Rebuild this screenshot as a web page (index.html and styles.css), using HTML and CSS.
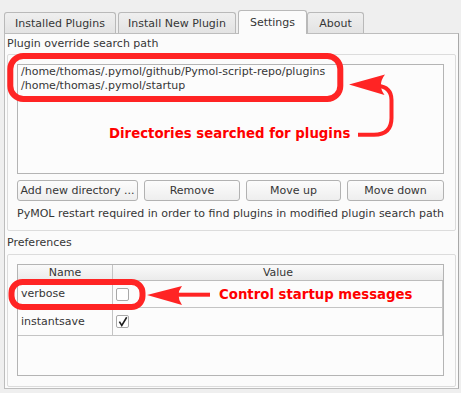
FILE: index.html
```html
<!DOCTYPE html>
<html lang="en">
<head>
    <meta charset="UTF-8">
    <title>Plugin Manager - Settings</title>
    <link rel="stylesheet" href="styles.css">
</head>
<body>
    <div class="tabbar">
        <div class="tab tab-installed">Installed Plugins</div>
        <div class="tab tab-install">Install New Plugin</div>
        <div class="tab tab-settings active">Settings</div>
        <div class="tab tab-about">About</div>
    </div>

    <div class="panel">
        <div class="group-title">Plugin override search path</div>
        <div class="frame frame-path">
            <div class="path-list">
                <div class="path-item">/home/thomas/.pymol/github/Pymol-script-repo/plugins</div>
                <div class="path-item">/home/thomas/.pymol/startup</div>
            </div>
            <div class="button-row">
                <button class="btn btn-add">Add new directory ...</button>
                <button class="btn btn-remove">Remove</button>
                <button class="btn btn-up">Move up</button>
                <button class="btn btn-down">Move down</button>
            </div>
            <div class="note">PyMOL restart required in order to find plugins in modified plugin search path</div>
        </div>

        <div class="group-title title-prefs">Preferences</div>
        <div class="frame frame-prefs">
            <div class="pref-table">
                <div class="pref-row pref-head">
                    <div class="cell cell-name">Name</div>
                    <div class="cell cell-value">Value</div>
                </div>
                <div class="pref-row">
                    <div class="cell cell-name">verbose</div>
                    <div class="cell cell-value"><span class="checkbox"></span></div>
                </div>
                <div class="pref-row pref-row-2">
                    <div class="cell cell-name">instantsave</div>
                    <div class="cell cell-value">
                        <span class="checkbox">
                            <svg width="12" height="12" viewBox="0 0 12 12"><path d="M2.6 5.6 L5.2 9.8 L10.6 0.8" fill="none" stroke="#1e1e1e" stroke-width="1.7"/></svg>
                        </span>
                    </div>
                </div>
            </div>
        </div>
    </div>

    <!-- red notes drawn over the screenshot -->
    <svg class="marks" width="461" height="393" viewBox="0 0 461 393">
        <rect x="10.3" y="56" width="330" height="43" rx="13" fill="none" stroke="#ff2424" stroke-width="6"/>
        <path d="M358 134.7 L374 134.7 Q391.5 134.7 391.5 118 L391.5 100 Q391.5 87 377 85.5" fill="none" stroke="#ff2424" stroke-width="4"/>
        <path d="M349 84.5 L385 74.5 Q377 85 384.5 95 Z" fill="#ff2424"/>
        <rect x="11.5" y="282" width="131" height="25" rx="11" fill="none" stroke="#ff2424" stroke-width="6"/>
        <path d="M178 294.7 L210 294.7" stroke="#ff2424" stroke-width="4"/>
        <path d="M147 295 L182 286 Q175 295 182 305 Z" fill="#ff2424"/>
    </svg>
    <div class="mark-text mark-dirs">Directories searched for plugins</div>
    <div class="mark-text mark-startup">Control startup messages</div>
</body>
</html>
```

FILE: styles.css
```css
* {
    margin: 0;
    padding: 0;
    box-sizing: border-box;
}
body {
    width: 461px;
    height: 393px;
    overflow: hidden;
    position: relative;
    background: #efefef;
    color: #363636;
    font-family: "DejaVu Sans", sans-serif;
    font-size: 11px;
    line-height: 14px;
}
.tabbar {
    display: flex;
    align-items: flex-end;
    height: 23px;
    margin-top: 10px;
    padding-left: 4px;
    position: relative;
    z-index: 1;
}
.tab {
    height: 21px;
    padding-top: 2px;
    border: 1px solid #b9b9b9;
    border-bottom: none;
    border-radius: 3px 3px 0 0;
    background: linear-gradient(#efefef, #e3e3e3);
    display: flex;
    align-items: center;
    justify-content: center;
    margin-right: 2px;
}
.tab.active {
    height: 24px;
    padding-top: 0;
    margin-bottom: -1px;
    margin-right: 0;
    background: #fbfbfb;
}
.tab-installed { width: 112px; }
.tab-install { width: 118px; }
.tab-settings { width: 69px; }
.tab-about { width: 57px; }
.panel {
    width: 455px;
    margin-left: 4px;
    border: 1px solid #bdbdbd;
    border-right-color: #a8a8a8;
    background: #fbfbfb;
    padding: 3px 2px 1px;
}
.group-title {
    height: 14px;
}
.title-prefs {
    margin-top: 5px;
}
.frame {
    border: 1px solid #dcdcdc;
    border-radius: 2px;
    margin-top: 3px;
    padding: 9px 11px 9px 9px;
}
.frame-prefs {
    margin-top: 4px;
    padding-bottom: 10px;
}
.path-list {
    height: 110px;
    border: 1px solid #b4b4b4;
    background: #fcfcfc;
    padding-left: 3px;
}
.button-row {
    display: flex;
    gap: 6px;
    margin-top: 6px;
}
.btn {
    height: 21px;
    padding: 0;
    border: 1px solid #b2b2b2;
    border-radius: 3px;
    background: linear-gradient(#fcfcfc, #eeeeee);
    color: #363636;
    font-family: "DejaVu Sans", sans-serif;
    font-size: 11px;
    white-space: nowrap;
}
.btn-add { width: 121px; }
.btn-remove { width: 96px; }
.btn-up { width: 95px; }
.btn-down { width: 97px; }
.note {
    margin-top: 6px;
    height: 14px;
}
.pref-table {
    height: 112px;
    border: 1px solid #b4b4b4;
    background: #fcfcfc;
}
.pref-row {
    display: flex;
    height: 27px;
    border-bottom: 1px solid #c4c4c4;
}
.pref-row-2 {
    height: 28px;
}
.pref-head {
    height: 16px;
    border-bottom: 1px solid #bcbcbc;
    background: linear-gradient(#fafafa, #ebebeb);
}
.cell {
    display: flex;
    align-items: center;
}
.cell-name {
    width: 95px;
    padding-left: 3px;
    border-right: 1px solid #c4c4c4;
}
.cell-value {
    flex: 1;
    padding-left: 3px;
    border-right: 1px solid #c4c4c4;
}
.pref-head .cell {
    justify-content: center;
    padding-left: 0;
}
.pref-head .cell-value {
    border-right: none;
}
.checkbox {
    width: 13px;
    height: 13px;
    border: 1px solid #a8a8a8;
    border-radius: 2px;
    background: #fff;
    display: flex;
    align-items: center;
    justify-content: center;
}
.checkbox svg {
    display: block;
}
.marks {
    position: absolute;
    left: 0;
    top: 0;
    pointer-events: none;
}
.mark-text {
    position: absolute;
    color: #ff0000;
    font-weight: bold;
    font-size: 13.3px;
    line-height: 16px;
    white-space: nowrap;
}
.mark-dirs {
    left: 109px;
    top: 126px;
}
.mark-startup {
    left: 219px;
    top: 287px;
}
```
